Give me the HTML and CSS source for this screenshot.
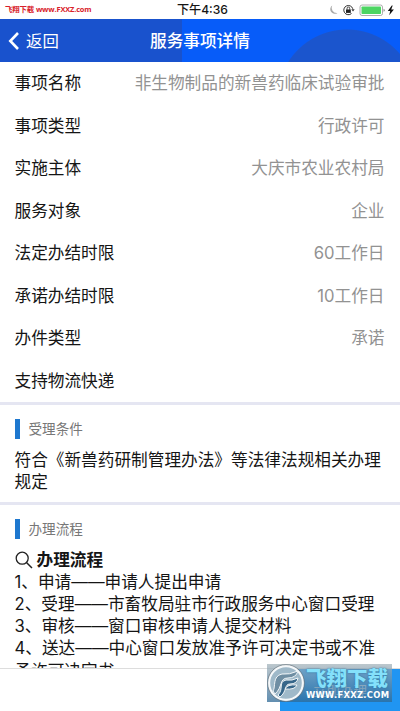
FILE: index.html
```html
<!DOCTYPE html>
<html lang="zh-CN">
<head>
<meta charset="utf-8">
<title>服务事项详情</title>
<link rel="stylesheet" href="styles.css">
</head>
<body>
<div class="screen">
  <div class="status">
    <span class="site">飞翔下载 www.FXXZ.com</span>
    <span class="time">下午4:36</span>
    <svg class="indicators" viewBox="0 0 68 14" width="68" height="14">
      <path d="M4.200 2.400A4.400 4.400 0 1 0 9.500 10A5.200 5.200 0 0 1 4.200 2.400Z" fill="#aaa"/>
      <path d="M24.800 5.800A4.600 4.600 0 1 0 23.500 10.500" fill="none" stroke="#333" stroke-width="1"/>
      <rect x="18" y="6.500" width="4.800" height="3.400" fill="#222"/>
      <path d="M19.100 6.800V5.300a1.300 1.300 0 0 1 2.600 0V6.800" fill="none" stroke="#222" stroke-width=".8"/>
      <path d="M23.300 6.300h3.400l-1.700 2.200z" fill="#333"/>
      <rect x="32" y="2" width="22.500" height="10.500" rx="2" fill="#fff" stroke="#999" stroke-width=".8"/>
      <rect x="33.500" y="3.500" width="19.500" height="7.500" rx=".8" fill="#4cd562"/>
      <path d="M55.500 5.700v3q1.300-.4 1.300-1.500T55.500 5.700z" fill="#999"/>
      <path d="M63.800 2.500L59.800 8h2.400l-1 4.300L65.900 6.600h-2.700L64.700 2.500z" fill="#111"/>
    </svg>
  </div>
  <header class="navbar">
    <div class="back">
      <svg viewBox="0 0 12 20" width="12" height="20"><path d="M10 2L2.300 10L10 18" fill="none" stroke="#fff" stroke-width="2.600"/></svg>
      <span>返回</span>
    </div>
    <h1>服务事项详情</h1>
  </header>
  <main class="content">
    <dl class="details">
      <div class="row"><dt>事项名称</dt><dd>非生物制品的新兽药临床试验审批</dd></div>
      <div class="row"><dt>事项类型</dt><dd>行政许可</dd></div>
      <div class="row"><dt>实施主体</dt><dd>大庆市农业农村局</dd></div>
      <div class="row"><dt>服务对象</dt><dd>企业</dd></div>
      <div class="row"><dt>法定办结时限</dt><dd>60工作日</dd></div>
      <div class="row"><dt>承诺办结时限</dt><dd>10工作日</dd></div>
      <div class="row"><dt>办件类型</dt><dd>承诺</dd></div>
      <div class="row"><dt>支持物流快递</dt><dd></dd></div>
    </dl>
    <section class="block conditions">
      <h2>受理条件</h2>
      <p>符合《新兽药研制管理办法》等法律法规相关办理规定</p>
    </section>
    <section class="block process">
      <h2>办理流程</h2>
      <h3><svg viewBox="0 0 18 18" width="18" height="18"><circle cx="7.200" cy="7.200" r="6" fill="none" stroke="#222" stroke-width="1.300"/><path d="M11.500 11.500L17 17" stroke="#222" stroke-width="1.500"/></svg>办理流程</h3>
      <p>1、申请——申请人提出申请</p>
      <p>2、受理——市畜牧局驻市行政服务中心窗口受理</p>
      <p>3、审核——窗口审核申请人提交材料</p>
      <p>4、送达——中心窗口发放准予许可决定书或不准予许可决定书</p>
    </section>
  </main>
  <footer class="actions"><button class="apply">立即办理</button></footer>
  <div class="watermark">
    <svg viewBox="0 0 38 38" width="38" height="38">
      <circle cx="19" cy="19" r="17" fill="#9fb9c9" stroke="#f5f8fa" stroke-width="2.400"/>
      <circle cx="19" cy="19" r="18.400" fill="none" stroke="#69747c" stroke-width=".7"/>
      <path d="M6 27C9 23 5 12 15 10Q22 11 31 7Q29 14 21 14C12 14 16 23 8 30Z" fill="#6f8ea3" stroke="#f2f6f8"/>
      <path d="M11 31C17 25 11 18 19 16Q25 17 31 14Q30 20 23 20C17 20 20 28 13 33Z" fill="#36668a" stroke="#f2f6f8"/>
      <path d="M18 25Q20 20 30 21Q28 26 18 25Z" fill="#36668a" stroke="#f2f6f8"/>
    </svg>
    <div class="mark"><b>飞翔下载</b><span>WWW.FXXZ.COM</span></div>
  </div>
</div>
</body>
</html>
```
FILE: styles.css
```css
* { box-sizing: border-box; }
body, h1, h2, h3, p, dl, dd { margin: 0; }
body {
  background: #fff;
  font-family: Inter, "Noto Sans CJK SC", sans-serif;
}
.screen {
  position: relative;
  width: 400px;
  height: 711px;
  overflow: hidden;
  display: flex;
  flex-direction: column;
  font-size: 16.67px;
  color: #151515;
}
.status {
  flex: none;
  height: 19px;
  display: grid;
  grid-template-columns: 177px 1fr 72px;
  align-items: center;
}
.site {
  padding-left: 5px;
  font: bold 7.4px/19px "Open Sans", "Noto Sans CJK SC", sans-serif;
  letter-spacing: -0.12px;
  color: #d8202a;
  white-space: nowrap;
}
.time { padding-top: 1px; font-size: 12.1px; font-weight: 500; line-height: 18px; }
.indicators { margin-top: 1px; }
.navbar {
  flex: none;
  height: 43px;
  display: grid;
  grid-template-columns: 150px 1fr;
  align-items: center;
  color: #fff;
  background:
    radial-gradient(circle at 347px 80px, #1b55cd 69px, transparent 70px),
    linear-gradient(90deg, #1952cd 182px, #075cf9 182px);
}
.back { display: flex; align-items: center; gap: 6px; padding-left: 8px; font-size: 16.4px; }
.back span, .navbar h1 { padding-bottom: 1px; }
.navbar h1 { font-size: 16.67px; font-weight: 500; }
.content { flex: none; height: 606px; overflow: hidden; }
.row {
  height: 42.5px;
  display: flex;
  align-items: center;
  justify-content: space-between;
  padding: 0 15.500px 2px 14.500px;
}
.row dd { color: #929292; }
.block { border-top: 3px solid #e5e6f2; padding: 14px 14.500px 0; }
.conditions { height: 100px; }
.block h2 {
  height: 20px;
  margin-bottom: 9.500px;
  border-left: 5px solid #1e78cf;
  padding-left: 9px;
  font-size: 13.6px;
  font-weight: 400;
  line-height: 20px;
  color: #777;
}
.block p { line-height: 22.2px; }
.block h3 {
  display: flex;
  align-items: center;
  gap: 4px;
  font-size: 16.67px;
  line-height: 22.2px;
}
.actions {
  flex: 1;
  border-top: 1px solid #ddd;
  display: flex;
  justify-content: flex-end;
}
.apply {
  width: 120px;
  border: 0;
  background: #2095f2;
  color: #fff;
  font: 13.5px "Noto Sans CJK SC", sans-serif;
  padding: 0;
}
.watermark {
  position: absolute;
  left: 267px;
  top: 664px;
  width: 125px;
  height: 38px;
  display: flex;
  background: linear-gradient(rgba(160, 176, 184, .7), rgba(45, 105, 150, .75));
}
.mark { display: flex; flex-direction: column; padding-left: 1px; white-space: nowrap; }
.mark b {
  font: 900 20.5px/27px "Noto Sans CJK SC", sans-serif;
  color: #84e0fa;
  text-shadow: 0 0 2px #206c9b;
}
.mark span {
  font: bold 8.4px/8px "DejaVu Sans", sans-serif;
  letter-spacing: 0.3px;
  color: #fff;
}
```
